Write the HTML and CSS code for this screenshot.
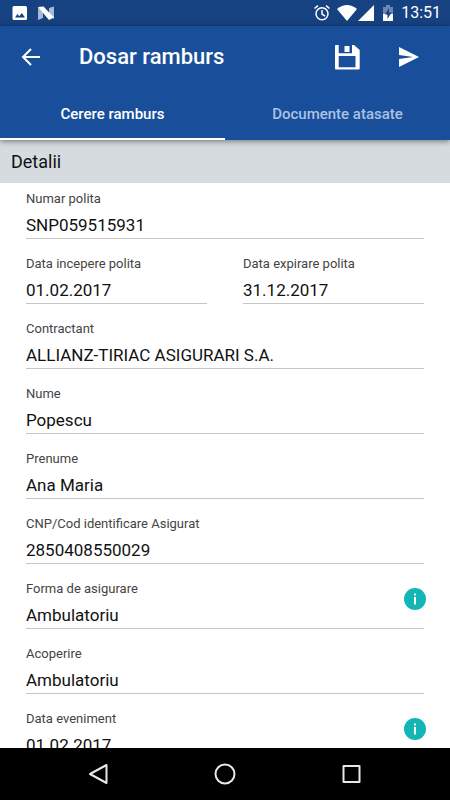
FILE: index.html
```html
<!DOCTYPE html>
<html lang="ro">
<head>
<meta charset="utf-8">
<meta name="viewport" content="width=device-width, initial-scale=1">
<title>Dosar ramburs</title>
<link rel="stylesheet" href="styles.css">
</head>
<body>
<div class="status">
  <div class="status-group notices">
    <svg width="16" height="16" viewBox="0 0 16 16" aria-hidden="true"><path fill="#fff" fill-rule="evenodd" d="M2 1h11.500a1.500 1.500 0 0 1 1.500 1.500v11a1.500 1.500 0 0 1-1.500 1.500H2A1.500 1.500 0 0 1 .5 13.500v-11A1.500 1.500 0 0 1 2 1zM3 12.500h10L9.800 8l-2.500 3.200L5.500 9z"/></svg>
    <svg width="18" height="16" viewBox="0 0 18 16" aria-hidden="true"><path fill="#a9b9d5" d="M1 2l5 4v7l-5 2zM12 3l5-1.500V14l-5-3z"/><path fill="#fff" d="M1 2l5.500-.5L17 12.500 12 15z"/></svg>
  </div>
  <div class="status-group">
    <svg width="18" height="18" viewBox="0 0 24 24" aria-hidden="true"><g fill="none" stroke="#fff" stroke-width="2"><circle cx="12" cy="13" r="8"/><path d="M12 8v5.500l4 2.500M2 6l4.600-3.900M22 6l-4.600-3.900"/></g></svg>
    <svg class="wifi" width="20" height="16" viewBox="0 0 20 16" aria-hidden="true"><path fill="#fff" d="M0 4Q10-4 20 4L10 16z"/></svg>
    <svg width="16" height="16" viewBox="0 0 16 16" aria-hidden="true"><path fill="#fff" d="M16 0v16H0z"/></svg>
    <svg class="battery" width="12" height="16" viewBox="0 0 12 16" aria-hidden="true"><path fill="#6c87b0" d="M4 0h4v2h3v7H1V2h3z"/><path fill="#fff" d="M1 9h10v7H1z"/><path fill="#164282" d="M7 3L3 9.500h2.500V14l4-6.500H7z"/></svg>
    <span class="clock">13:51</span>
  </div>
</div>
<header class="header">
  <div class="toolbar">
    <button class="icon-button" type="button" aria-label="Inapoi"><svg width="20" height="20" viewBox="0 0 20 20"><path fill="none" stroke="#fff" stroke-width="2" d="M19 10H2M10 2l-8 8 8 8"/></svg></button>
    <h1>Dosar ramburs</h1>
    <button class="icon-button save" type="button" aria-label="Salveaza"><svg width="26" height="26" viewBox="0 0 26 26"><path fill="#fff" fill-rule="evenodd" d="M1 1.500Q1 1 2 1h2.700v8.300H18V1h2l5.700 5v18.500q0 1-1 1H2q-1 0-1-1zM4.700 12v11.200h16.800V12z"/><path fill="#fff" d="M10.500 2h5v6h-5z"/></svg></button>
    <button class="icon-button" type="button" aria-label="Trimite"><svg width="20" height="20" viewBox="0 0 20 20"><path fill="#fff" d="M0 0l20 10L0 20v-8l14-2L0 8z"/></svg></button>
  </div>
  <nav class="tabs">
    <a class="tab active" href="#cerere">Cerere ramburs</a>
    <a class="tab" href="#documente">Documente atasate</a>
  </nav>
</header>
<main class="content" id="cerere">
  <h2>Detalii</h2>
  <form class="form">
    <div class="field"><label for="polita">Numar polita</label><input id="polita" value="SNP059515931" readonly></div>
    <div class="row">
      <div class="field"><label for="start">Data incepere polita</label><input id="start" value="01.02.2017" readonly></div>
      <div class="field"><label for="end">Data expirare polita</label><input id="end" value="31.12.2017" readonly></div>
    </div>
    <div class="field"><label for="contractant">Contractant</label><input id="contractant" value="ALLIANZ-TIRIAC ASIGURARI S.A." readonly></div>
    <div class="field"><label for="nume">Nume</label><input id="nume" value="Popescu" readonly></div>
    <div class="field"><label for="prenume">Prenume</label><input id="prenume" value="Ana Maria" readonly></div>
    <div class="field"><label for="cnp">CNP/Cod identificare Asigurat</label><input id="cnp" value="2850408550029" readonly></div>
    <div class="field"><label for="forma">Forma de asigurare</label><input id="forma" value="Ambulatoriu">
      <button class="info" type="button" aria-label="Informatii forma de asigurare"><svg width="22" height="22" viewBox="0 0 22 22"><circle cx="11" cy="11" r="11" fill="#13b5b5"/><path fill="#fff" d="M10 5.500h2v2h-2zM10 9h2v7.500h-2z"/></svg></button></div>
    <div class="field"><label for="acoperire">Acoperire</label><input id="acoperire" value="Ambulatoriu"></div>
    <div class="field"><label for="data">Data eveniment</label><input id="data" value="01.02.2017">
      <button class="info" type="button" aria-label="Informatii data eveniment"><svg width="22" height="22" viewBox="0 0 22 22"><circle cx="11" cy="11" r="11" fill="#13b5b5"/><path fill="#fff" d="M10 5.500h2v2h-2zM10 9h2v7.500h-2z"/></svg></button></div>
  </form>
</main>
<footer class="system-nav">
  <button type="button" aria-label="Back"><svg width="22" height="22" viewBox="0 0 22 22"><path d="M19.500 2v18L3 11z"/></svg></button>
  <button type="button" aria-label="Home"><svg width="22" height="22" viewBox="0 0 22 22"><circle cx="11" cy="11" r="9.500"/></svg></button>
  <button type="button" aria-label="Recents"><svg width="22" height="22" viewBox="0 0 22 22"><rect x="2.500" y="3" width="16" height="16"/></svg></button>
</footer>
</body>
</html>
```
FILE: styles.css
```css
* {
  box-sizing: border-box;
}

body {
  margin: 0;
  height: 100vh;
  display: flex;
  flex-direction: column;
  overflow: hidden;
  background: #fff;
  color: #111;
  font-family: Roboto, "Liberation Sans", sans-serif;
}

button {
  display: flex;
  align-items: center;
  justify-content: center;
  margin: 0;
  padding: 0;
  border: 0;
  background: none;
}

svg {
  display: block;
}

.status {
  flex: none;
  display: flex;
  align-items: center;
  justify-content: space-between;
  height: 26px;
  padding: 0 9px 0 12px;
  background: #164282;
  color: #fff;
}

.status-group {
  display: flex;
  align-items: center;
}

.notices {
  gap: 9px;
}

.wifi {
  margin: 0 1px 0 6px;
}

.battery {
  margin: 0 7px 0 8px;
}

.clock {
  font-size: 16px;
  font-weight: 400;
  line-height: 28px;
}

.header {
  flex: none;
  position: relative;
  background: #194f9a;
  box-shadow: 0 1px 6px rgba(0, 0, 0, 0.5);
}

.toolbar {
  display: flex;
  align-items: center;
  height: 62px;
  padding: 0 26px 0 16px;
}

.icon-button {
  width: 30px;
  height: 40px;
}

.save {
  margin-right: 32px;
}

h1 {
  flex: 1;
  margin: 0 0 0 33px;
  color: #fff;
  font-size: 22px;
  font-weight: 500;
  line-height: 32px;
}

.tabs {
  display: flex;
  height: 52px;
}

.tab {
  flex: 1;
  border-bottom: 2px solid transparent;
  color: #a9c2e6;
  font-size: 15px;
  font-weight: 500;
  line-height: 52px;
  text-align: center;
  text-decoration: none;
}

.tab.active {
  border-bottom-color: #fff;
  color: #fff;
}

.content {
  flex: 1;
  min-height: 0;
  overflow: hidden;
}

h2 {
  margin: 0;
  padding: 0 11px;
  background: #d6dbdf;
  font-size: 18px;
  font-weight: 400;
  line-height: 43px;
}

.form {
  display: flex;
  flex-direction: column;
  gap: 16px;
  padding: 7px 26px 16px;
}

.row {
  display: flex;
  gap: 36px;
}

.row .field {
  flex: 1;
  min-width: 0;
}

.field {
  position: relative;
  display: flex;
  flex-direction: column;
  gap: 6px;
}

label {
  color: #444;
  font-size: 13px;
  line-height: 17px;
}

input {
  width: 100%;
  height: 26px;
  padding: 0 0 2px;
  border: 0;
  border-bottom: 1px solid #c6c6c6;
  border-radius: 0;
  outline: 0;
  background: none;
  color: #111;
  font: 400 17px Roboto, "Liberation Sans", sans-serif;
}

.info {
  position: absolute;
  top: 8px;
  right: -2px;
}

.system-nav {
  flex: none;
  display: flex;
  justify-content: center;
  gap: 105px;
  height: 52px;
  background: #000;
}

.system-nav path,
.system-nav circle,
.system-nav rect {
  fill: none;
  stroke: #e8e8e8;
  stroke-width: 2;
  stroke-linejoin: round;
}
```
